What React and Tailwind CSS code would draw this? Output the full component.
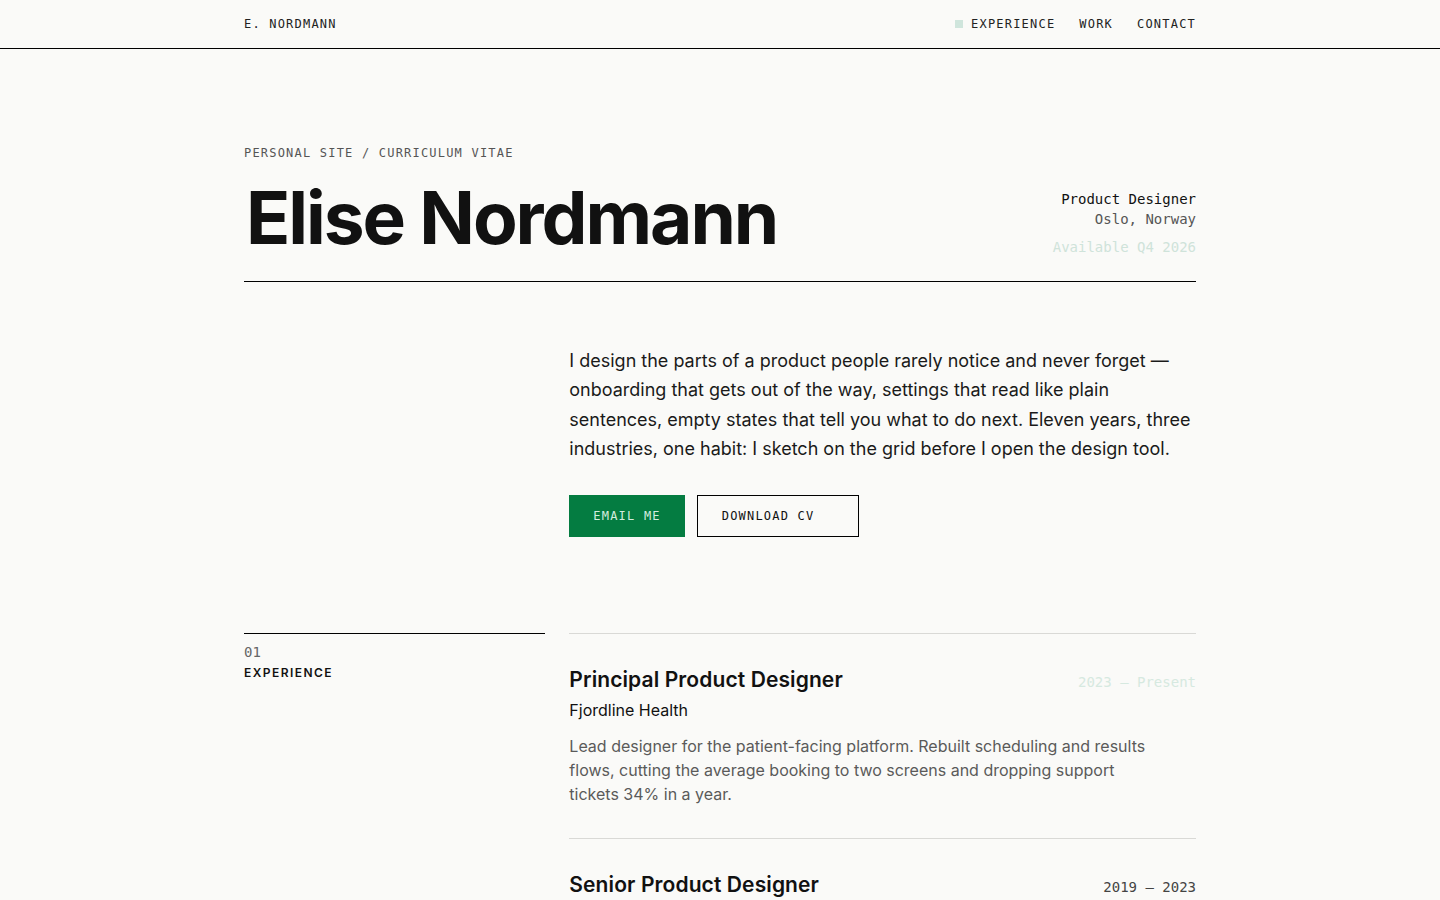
import React from 'react';

const mono = "font-['DejaVu_Sans_Mono','Liberation_Mono',monospace]";
const sans = "font-['Inter','Liberation_Sans',sans-serif]";

const jobs = [
  {
    title: 'Principal Product Designer',
    company: 'Fjordline Health',
    period: '2023 — Present',
    current: true,
    text: 'Lead designer for the patient-facing platform. Rebuilt scheduling and results flows, cutting the average booking to two screens and dropping support tickets 34% in a year.',
  },
  {
    title: 'Senior Product Designer',
    company: 'Nordvik Bank',
    period: '2019 — 2023',
    current: false,
    text: 'Owned onboarding and account settings for the retail app. Replaced a nine-step sign-up with a three-step flow and wrote the plain-language guidelines the team still uses.',
  },
];

const Nav = () => (
  <header className="border-b border-black bg-[#fafaf8]">
    <div className={`mx-auto flex h-12 w-[952px] items-center justify-between ${mono} text-[12px] tracking-[0.1em] text-[#222]`}>
      <a href="#">E. NORDMANN</a>
      <nav className="flex items-center gap-6">
        <a href="#experience" className="flex items-center gap-2">
          <span className="h-2 w-2 bg-[#cfe5dc]"></span>
          EXPERIENCE
        </a>
        <a href="#work">WORK</a>
        <a href="#contact">CONTACT</a>
      </nav>
    </div>
  </header>
);

const App = () => {
  return (
    <div className={`min-h-screen bg-[#fafaf8] text-[#111] ${sans}`}>
      <Nav />

      <main className="mx-auto w-[952px]">
        {/* intro header */}
        <section className="pt-24">
          <p className={`${mono} text-[12px] leading-4 tracking-[0.1em] text-[#555]`}>
            PERSONAL SITE / CURRICULUM VITAE
          </p>
          <div className="mt-5 flex items-end justify-between border-b border-black pb-[27px]">
            <h1 className="pl-[2px] text-[73px] font-bold leading-none tracking-[-0.028em] text-[#111]">
              Elise Nordmann
            </h1>
            <div className={`${mono} mb-[-3px] text-right text-[14px] leading-5`}>
              <p className="text-[#111]">Product Designer</p>
              <p className="text-[#555]">Oslo, Norway</p>
              <p className="mt-2 text-[#cfe3da]">Available Q4 2026</p>
            </div>
          </div>
        </section>

        {/* summary */}
        <section className="grid grid-cols-12 gap-6 pt-16 pb-24">
          <div className="col-span-4"></div>
          <div className="col-span-8">
            <p className="text-[18px] leading-[29.4px] text-[#1a1a1a]">
              I design the parts of a product people rarely notice and never forget — onboarding that gets out of the way, settings that read like plain sentences, empty states that tell you what to do next. Eleven years, three industries, one habit: I sketch on the grid before I open the design tool.
            </p>
            <div className={`mt-[31px] flex gap-3 ${mono} text-[12px] tracking-[0.1em]`}>
              <a href="#contact" className="flex h-[42px] items-center bg-[#047c41] px-6 text-[#d3ecdf]">
                EMAIL ME
              </a>
              <a href="#" className="flex h-[42px] w-[162px] items-center border border-black pl-6 text-[#111]">
                DOWNLOAD CV
              </a>
            </div>
          </div>
        </section>

        {/* experience */}
        <section id="experience" className="grid grid-cols-12 gap-6">
          <div className="col-span-4 self-start border-t border-black pt-2">
            <p className={`${mono} text-[14px] leading-5 text-[#666]`}>01</p>
            <h2 className="mt-[3px] text-[12px] font-semibold leading-4 tracking-[0.12em]">EXPERIENCE</h2>
          </div>
          <div className="col-span-8">
            {jobs.map((job) => (
              <article key={job.title} className="border-t border-[#d9d9d6] pt-8 pb-8">
                <div className="flex items-baseline justify-between">
                  <h3 className="text-[21px] font-semibold leading-7 tracking-[0.005em] text-[#111]">{job.title}</h3>
                  <span className={`${mono} text-[14px] ${job.current ? 'text-[#d6e9e0]' : 'text-[#444]'}`}>
                    {job.period}
                  </span>
                </div>
                <p className="mt-1 text-[16px] leading-6 text-[#111]">{job.company}</p>
                <p className="mt-3 max-w-[590px] text-[16px] leading-6 text-[#5a5a5a]">{job.text}</p>
              </article>
            ))}
          </div>
        </section>
      </main>
    </div>
  );
};

export default App;
